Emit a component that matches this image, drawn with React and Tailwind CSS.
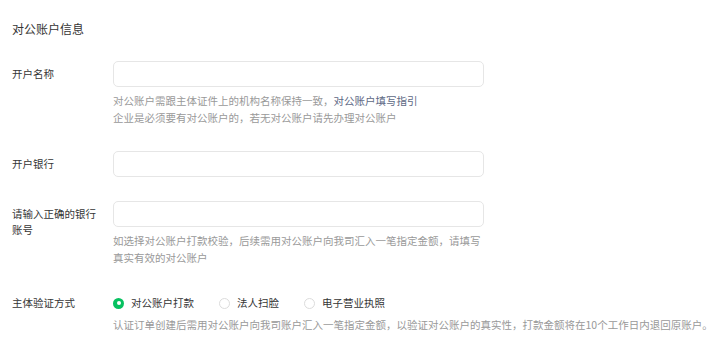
import React from "react";

const font = { fontFamily: '"Noto Sans CJK SC", "Noto Sans", sans-serif' };

function Radio({ checked, label }) {
  return (
    <div className="flex items-center mr-[25px]">
      {checked ? (
        <span className="w-[11px] h-[11px] rounded-full bg-[#07c160] flex items-center justify-center">
          <span className="w-[4px] h-[4px] rounded-full bg-white" />
        </span>
      ) : (
        <span className="w-[11px] h-[11px] rounded-full border border-[#dcdcdc] bg-white" />
      )}
      <span className="ml-[7px]">{label}</span>
    </div>
  );
}

export default function App() {
  return (
    <div
      className="w-[720px] h-[349px] bg-white pl-[12px] pt-[20px] text-[#353535] overflow-hidden"
      style={font}
    >
      <div className="text-[12px] leading-[18px]">对公账户信息</div>

      <div className="flex mt-[23px] text-[10.5px]">
        <div className="w-[101px] pt-[5px] leading-[16px] pr-[12px]">开户名称</div>
        <div className="w-[371px]">
          <div className="h-[26px] border border-[#e6e6e6] rounded-[5px] bg-white" />
          <div className="mt-[6px] leading-[16.5px] text-[#999] whitespace-nowrap">
            对公账户需跟主体证件上的机构名称保持一致，<span className="text-[#5d6884]">对公账户填写指引</span>
            <br />
            企业是必须要有对公账户的，若无对公账户请先办理对公账户
          </div>
        </div>
      </div>

      <div className="flex mt-[25px] text-[10.5px]">
        <div className="w-[101px] pt-[5px] leading-[16px] pr-[12px]">开户银行</div>
        <div className="w-[371px]">
          <div className="h-[26px] border border-[#e6e6e6] rounded-[5px] bg-white" />
        </div>
      </div>

      <div className="flex mt-[24px] text-[10.5px]">
        <div className="w-[101px] pt-[5px] leading-[16px] pr-[12px]">请输入正确的银行账号</div>
        <div className="w-[371px]">
          <div className="h-[26px] border border-[#e6e6e6] rounded-[5px] bg-white" />
          <div className="mt-[6px] leading-[16.5px] text-[#999] whitespace-nowrap">
            如选择对公账户打款校验，后续需用对公账户向我司汇入一笔指定金额，请填写
            <br />
            真实有效的对公账户
          </div>
        </div>
      </div>

      <div className="flex mt-[29px] text-[10.5px]">
        <div className="w-[101px] leading-[16px] pr-[12px] shrink-0">主体验证方式</div>
        <div>
          <div className="flex items-center leading-[16px]">
            <Radio checked label="对公账户打款" />
            <Radio label="法人扫脸" />
            <Radio label="电子营业执照" />
          </div>
          <div className="mt-[6px] leading-[16.5px] text-[#999] whitespace-nowrap">
            认证订单创建后需用对公账户向我司账户汇入一笔指定金额，以验证对公账户的真实性，打款金额将在10个工作日内退回原账户。
          </div>
        </div>
      </div>
    </div>
  );
}
